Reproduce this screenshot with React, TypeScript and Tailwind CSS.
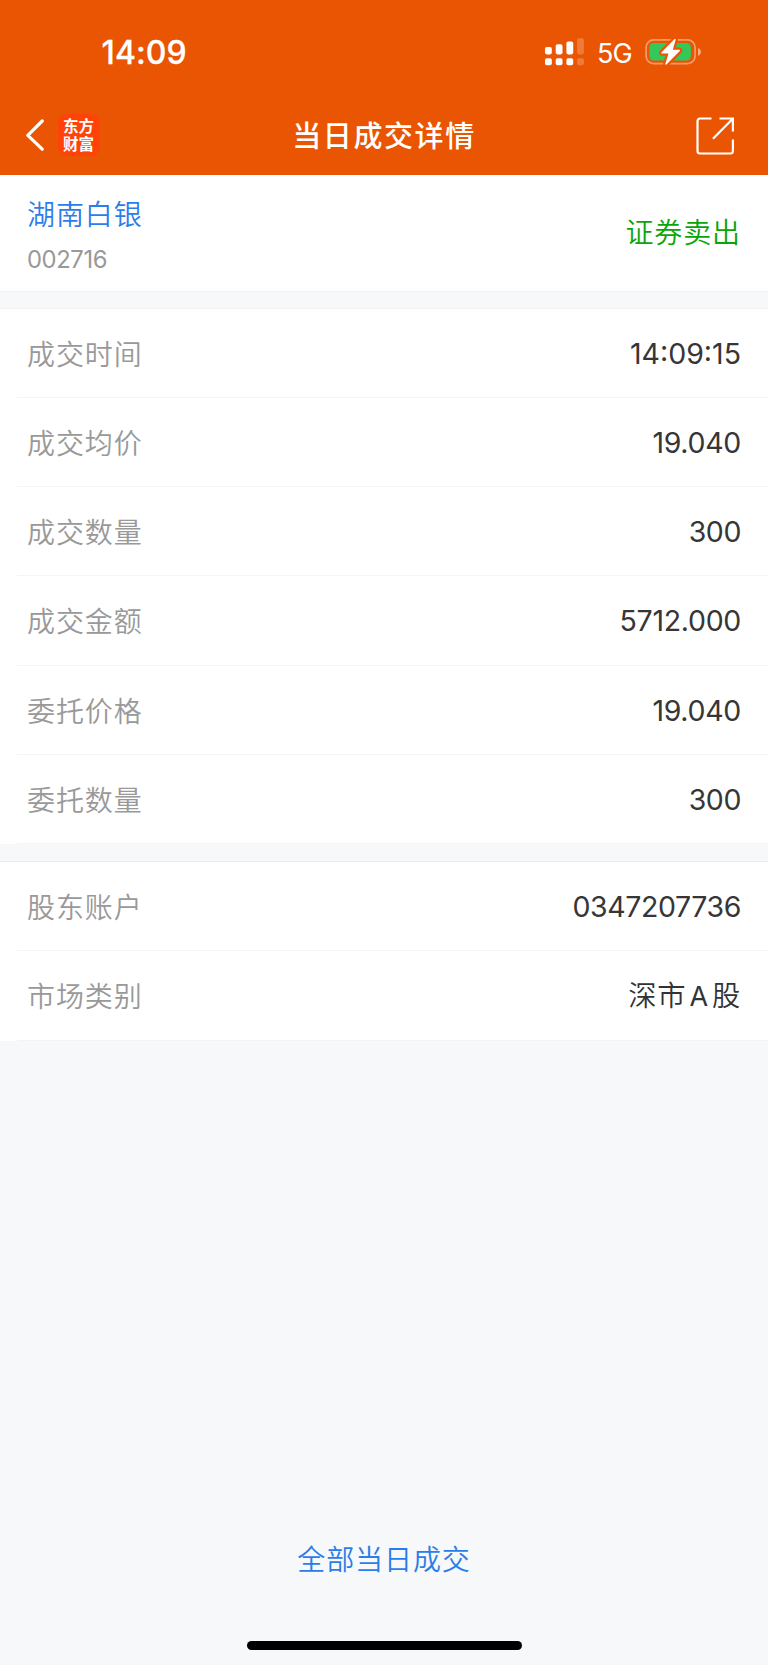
import type { ReactNode } from 'react';

type Field = { label: string; value: string; valueClass: string };

const num = "font-['Inter','Noto_Sans_CJK_SC',sans-serif]";
const han = "font-['Noto_Sans_CJK_SC',sans-serif]";

const tradeFields: Field[] = [
  { label: '成交时间', value: '14:09:15', valueClass: 'pt-[2px] tracking-[0px]' },
  { label: '成交均价', value: '19.040', valueClass: 'pt-[2px] tracking-[-0.3px]' },
  { label: '成交数量', value: '300', valueClass: 'pt-[2px] tracking-[-0.4px]' },
  { label: '成交金额', value: '5712.000', valueClass: 'pt-[2px] tracking-[-0.3px]' },
  { label: '委托价格', value: '19.040', valueClass: 'pt-[2px] tracking-[-0.3px]' },
  { label: '委托数量', value: '300', valueClass: 'pt-[2px] tracking-[-0.4px]' },
];

const accountFields: Field[] = [
  { label: '股东账户', value: '0347207736', valueClass: 'pt-[2px] tracking-[-0.4px]' },
];

const labelText = `${han} text-[28px] font-[350] leading-10 tracking-[0.9px]`;

function Row({ label, children }: { label: string; children: ReactNode }) {
  return (
    <div className="pl-[17px]">
      <div className="flex h-[89.25px] items-center justify-between border-b border-[#f3f4f5] pl-[10px] pr-[27px]">
        <dt className={`${labelText} text-[#999]`}>{label}</dt>
        {children}
      </div>
    </div>
  );
}

function FieldList({ fields, children }: { fields: Field[]; children?: ReactNode }) {
  return (
    <dl className="bg-white">
      {fields.map((f) => (
        <Row key={f.label} label={f.label}>
          <dd className={`${num} text-[28.5px] leading-10 text-[#363636] ${f.valueClass}`}>{f.value}</dd>
        </Row>
      ))}
      {children}
    </dl>
  );
}

function SignalIcon() {
  return (
    <svg width="40" height="28" viewBox="0 0 40 28" fill="#fff">
      <rect x="0" y="9" width="6.8" height="7.4" rx="1.8" />
      <rect x="10.700" y="6.3" width="6.8" height="10.1" rx="1.8" />
      <rect x="21.4" y="3.4" width="6.8" height="13" rx="1.8" />
      <rect x="0" y="20.2" width="6.8" height="7" rx="1.8" />
      <rect x="10.700" y="20.2" width="6.8" height="7" rx="1.8" />
      <rect x="21.4" y="20.2" width="6.8" height="7" rx="1.8" />
      <g opacity="0.22">
        <rect x="32.1" y="0.3" width="6.8" height="16.1" rx="1.8" />
        <rect x="32.1" y="20.2" width="6.8" height="7" rx="1.8" />
      </g>
    </svg>
  );
}

function BatteryIcon() {
  return (
    <svg width="58" height="28" viewBox="0 0 58 28">
      <rect x="1.1" y="1.8" width="49" height="23.8" rx="7.6" fill="none" stroke="#fff" strokeOpacity="0.42" strokeWidth="1.7" />
      <path d="M53 9.9c3.9 1.2 3.9 6.6 0 7.8z" fill="#fff" fillOpacity="0.5" />
      <rect x="4.3" y="5" width="41.6" height="17.5" rx="4.6" fill="#34c759" />
      <path
        d="M29.300 1.300 16.600 14.300c-.6.600-.2 1.300.5 1.300h6.400l-3.100 10.100c-.2 1 .7 1.300 1.300.600L34.800 13c.5-.600.2-1.200-.5-1.200h-6.500l2.800-9.900c.2-1-.7-1.300-1.300-.600z"
        fill="#fff"
        stroke="#ea5504"
        strokeWidth="4.5"
        paintOrder="stroke"
      />
    </svg>
  );
}

export default function App() {
  return (
    <div className="flex h-[1665px] w-[768px] flex-col overflow-hidden bg-[#f7f8fa]">
      <header className="h-[174.5px] shrink-0 bg-[#ea5504] text-white">
        <div className="flex h-[98px] items-start justify-between pl-[101.5px] pr-[65px]">
          <div className={`${num} mt-[33px] text-[32px] font-medium leading-10 tracking-[0.1px] [-webkit-text-stroke:0.3px_#fff]`}>14:09</div>
          <div className="mt-[38px] flex h-7 items-start">
            <SignalIcon />
            <span className={`${num} ml-[12px] mt-px w-[36.5px] whitespace-nowrap text-[27px] leading-[30px] tracking-[-1px]`}>5G</span>
            <span className="ml-[11.5px]">
              <BatteryIcon />
            </span>
          </div>
        </div>
        <div className="grid h-[76px] grid-cols-[1fr_auto_1fr] items-center">
          <div className="flex items-center pb-[2px] pl-[25px]">
            <svg width="20" height="32" viewBox="0 0 20 32" fill="none" stroke="#fff" strokeWidth="3.2">
              <path d="M17.2 2 2.8 16.4l14.4 13.8" strokeLinecap="round" strokeLinejoin="round" />
            </svg>
            <div className="ml-[12.5px] flex h-[42px] w-[42px] flex-col items-center justify-center rounded-[9px] bg-[#ff4208] pb-[2px] font-['Noto_Sans_CJK_SC',sans-serif] text-[15.5px] font-bold leading-[18px]">
              <span>东方</span>
              <span>财富</span>
            </div>
          </div>
          <h1 className={`${han} pb-[4px] text-[29px] font-medium leading-10 tracking-[1.6px]`}>当日成交详情</h1>
          <div className="flex justify-end pr-[33px]">
            <svg width="41" height="40" viewBox="0 0 41 40" fill="none" stroke="#fff" strokeWidth="2.2">
              <path d="M17.500 2.500H6A2.500 2.500 0 0 0 3.500 5v30A2.500 2.500 0 0 0 6 37.500h30.400a2.500 2.500 0 0 0 2.500-2.500V23.500M25.500 2.500h13.400v13M38.500 2.900 19 22.700" />
            </svg>
          </div>
        </div>
      </header>

      <section className="flex h-[116px] shrink-0 items-center justify-between bg-white pl-[27px] pr-[27px]">
        <div>
          <div className={`${labelText} text-[#2b7de9]`}>湖南白银</div>
          <div className={`${num} mb-[-2px] mt-[12px] text-[23.8px] leading-[30px] tracking-[-0.4px] text-[#999]`}>002716</div>
        </div>
        <div className={`${labelText} pb-[3px] text-[#09a509]`}>证券卖出</div>
      </section>

      <div className="h-[18px] shrink-0 border-y border-[#f2f3f4]" />
      <FieldList fields={tradeFields} />
      <div className="h-[18px] shrink-0 border-b border-[#ebecee]" />
      <FieldList fields={accountFields}>
        <Row label="市场类别">
          <dd className={`${num} pt-[3px] text-[28.3px] font-[350] leading-10 tracking-[0.7px] text-[#333] [word-spacing:-5.5px]`}>
            深市 <span className="text-[27px] font-normal">A</span> 股
          </dd>
        </Row>
      </FieldList>

      <footer className="mt-auto flex flex-col items-center pb-[15px]">
        <button className={`${labelText} text-[#2b7de9]`}>全部当日成交</button>
        <div className="mt-[63.5px] h-[9px] w-[275px] rounded-full bg-black" />
      </footer>
    </div>
  );
}
